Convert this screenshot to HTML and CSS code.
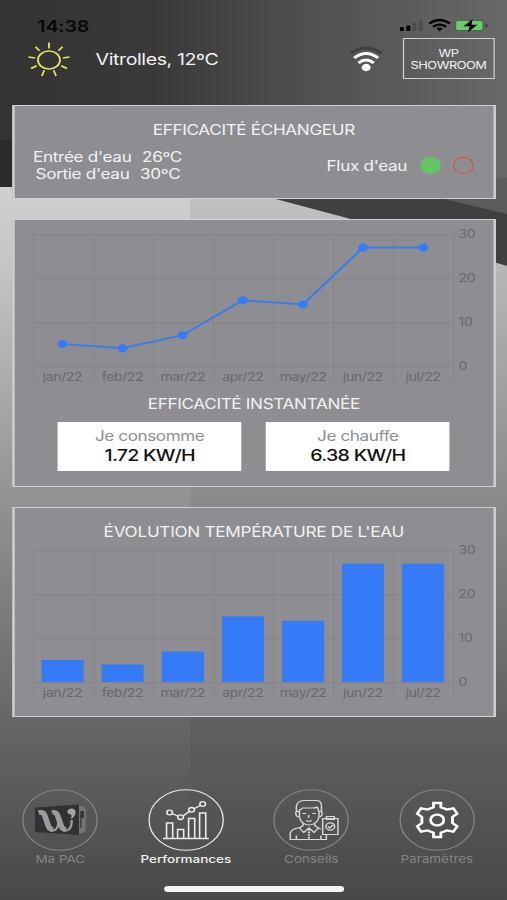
FILE: index.html
```html
<!DOCTYPE html>
<html lang="fr">
<head>
  <meta charset="UTF-8">
  <title>Performances</title>
  <link rel="stylesheet" href="styles.css">
</head>
<body>
<div class="screen">

  <!-- Background -->
  <svg class="backdrop" viewBox="0 0 507 900" preserveAspectRatio="none">
    <defs>
      <linearGradient id="sky" x1="0" y1="0" x2="1" y2="0">
        <stop offset="0" stop-color="#333"/>
        <stop offset="0.3" stop-color="#393939"/>
        <stop offset="0.55" stop-color="#4c4c4c"/>
        <stop offset="1" stop-color="#686868"/>
      </linearGradient>
      <linearGradient id="wall" gradientUnits="userSpaceOnUse" x1="0" y1="187" x2="0" y2="900">
        <stop offset="0" stop-color="#d0d0d0"/>
        <stop offset="0.1" stop-color="#c6c6c6"/>
        <stop offset="0.42" stop-color="#959595"/>
        <stop offset="0.75" stop-color="#666"/>
        <stop offset="1" stop-color="#484848"/>
      </linearGradient>
      <linearGradient id="seam" x1="0" y1="0" x2="0" y2="1">
        <stop offset="0" stop-color="#000" stop-opacity=".07"/>
        <stop offset="0.8" stop-color="#000" stop-opacity=".05"/>
        <stop offset="1" stop-color="#000" stop-opacity="0"/>
      </linearGradient>
    </defs>
    <rect width="507" height="900" fill="url(#sky)"/>
    <path d="M0 140H13V190H0z" fill="#2b2b2b"/>
    <path d="M200 190L507 178V280H200z" fill="#5c5c5c"/>
    <path d="M200 180L440 198L507 214V280H200z" fill="#404040"/>
    <path d="M0 187L230 187L347 218L507 266V900H0z" fill="url(#wall)"/>
    <path d="M190 187H230L347 218L507 266V900H190z" fill="url(#seam)"/>
  </svg>

  <!-- Status bar -->
  <div class="status">
    <span class="clock">14:38</span>
    <svg class="status-icons" width="74" height="16" viewBox="0 0 74 16">
      <rect x="1.5" y="9" width="3.4" height="4" rx="1"/>
      <rect x="6.8" y="7.5" width="3.4" height="5.5" rx="1"/>
      <rect x="12" y="5" width="3" height="8" rx="1" opacity=".2"/>
      <rect x="17" y="2.5" width="3" height="10.5" rx="1" opacity=".2"/>
      <g fill="none" stroke="#000" stroke-width="2.2">
        <path d="M25.5 5.6Q34-1.6 42.500 5.6"/>
        <path d="M28.700 8.8Q34 4.4 39.300 8.8"/>
      </g>
      <path d="M31.400 10.6Q34 8.6 36.600 10.6L34 13.2z"/>
      <rect x="46" y="1.7" width="24.5" height="11.6" rx="3" fill="#4b6b4d"/>
      <rect x="47.5" y="3" width="21.5" height="9" rx="1.8" fill="#6bcb6c"/>
      <path d="M71.5 5.2Q75 7.5 71.5 9.8z" fill="#333"/>
      <path d="M61 1L53.5 8.3H58.5L57 14.3L65 6.7H60z"/>
    </svg>
  </div>

  <!-- Weather and site -->
  <header class="topbar">
    <svg class="sun" width="42" height="38" viewBox="-21 -19 42 38">
      <circle r="9"/>
      <path d="M0-11.500V-17.400"/>
      <path d="M0-12V-17.200" transform="rotate(40)"/>
      <path d="M0-11.500V-17" transform="rotate(80)"/>
      <path d="M0-11.500V-17" transform="rotate(120)"/>
      <path d="M0-11V-17" transform="rotate(160)"/>
      <path d="M0-11V-17" transform="rotate(200)"/>
      <path d="M0-11.500V-17" transform="rotate(240)"/>
      <path d="M0-11.500V-17" transform="rotate(280)"/>
      <path d="M0-12V-17.200" transform="rotate(320)"/>
    </svg>
    <span class="city">Vitrolles, 12ºC</span>
    <svg class="wifi" width="30" height="28" viewBox="0 0 30 28">
      <g fill="none" stroke-width="2.9">
        <path d="M2.700 7.400Q15-3.200 27.300 7.400" stroke="#3f3f3f"/>
        <path d="M5.300 12Q15 3.200 24.700 12" stroke="#fff"/>
        <path d="M8.800 17Q15 11.200 21.200 17" stroke="#fff"/>
      </g>
      <circle cx="15" cy="21.5" r="3.7" fill="#fff"/>
    </svg>
    <div class="site">WP<br>SHOWROOM</div>
  </header>

  <!-- Heat exchanger -->
  <section class="card exchanger">
    <h2>EFFICACITÉ ÉCHANGEUR</h2>
    <div class="exchanger-row">
      <div class="temps">
        <div>Entrée d'eau <span>26ºC</span></div>
        <div class="out">Sortie d'eau <span>30ºC</span></div>
      </div>
      <div class="flow">Flux d'eau <i class="dot on"></i><i class="dot off"></i></div>
    </div>
  </section>

  <!-- Instant efficiency -->
  <section class="card instant">
    <svg class="chart" width="390" height="160" viewBox="0 0 390 160">
      <path class="grid" d="M15 14.5H358M15 58.5H358M15 102.500H358M15 146.500H358M15.500 14V162M64.500 14V162M113.500 14V162M162.500 14V162M211.500 14V162M260.500 14V162M309.500 14V162M358.500 14V162"/>
      <polyline class="line" points="39,124 88,128.300 137,115.200 186.300,80.200 235.400,84.500 284.500,27.600 333.600,27.600"/>
      <g class="pts">
        <circle cx="39" cy="124" r="4"/><circle cx="88" cy="128.300" r="4"/>
        <circle cx="137" cy="115.200" r="4"/><circle cx="186.300" cy="80.200" r="4"/>
        <circle cx="235.400" cy="84.500" r="4"/><circle cx="284.500" cy="27.600" r="4"/>
        <circle cx="333.600" cy="27.600" r="4"/>
      </g>
      <g class="ylab">
        <text x="362.500" y="18.500">30</text><text x="362.500" y="62.500">20</text>
        <text x="362.500" y="106">10</text><text x="362.500" y="150">0</text>
      </g>
      <g class="xlab">
        <text x="39" y="161.500">jan/22</text><text x="88" y="161.500">feb/22</text>
        <text x="137.300" y="161.500">mar/22</text><text x="186.300" y="161.500">apr/22</text>
        <text x="235.500" y="161.500">may/22</text><text x="284.300" y="161.500">jun/22</text>
        <text x="333.500" y="161.500">jul/22</text>
      </g>
    </svg>
    <h2 class="t-instant">EFFICACITÉ INSTANTANÉE</h2>
    <div class="meters">
      <div class="meter"><span>Je consomme</span><b>1.72 KW/H</b></div>
      <div class="meter"><span>Je chauffe</span><b>6.38 KW/H</b></div>
    </div>
  </section>

  <!-- Water temperature -->
  <section class="card water">
    <h2 class="t-water">ÉVOLUTION TEMPÉRATURE DE L'EAU</h2>
    <svg class="chart" width="390" height="160" viewBox="0 0 390 160">
      <path class="grid" d="M15 14.500H358M15 58.500H358M15 102.500H358M15 146.500H358M15.500 14V162M64.500 14V162M113.500 14V162M162.500 14V162M211.500 14V162M260.500 14V162M309.500 14V162M358.500 14V162"/>
      <g class="bars">
        <rect x="22" y="124" width="34.300" height="22"/>
        <rect x="71" y="128.500" width="34.300" height="17.500"/>
        <rect x="120.200" y="115.500" width="34.300" height="30.500"/>
        <rect x="169.300" y="80.300" width="34.300" height="65.700"/>
        <rect x="218.400" y="84.800" width="34.300" height="61.200"/>
        <rect x="267.300" y="27.700" width="34.300" height="118.300"/>
        <rect x="316.400" y="27.700" width="34.300" height="118.300"/>
      </g>
      <g class="ylab">
        <text x="362.500" y="18.500">30</text><text x="362.500" y="62.500">20</text>
        <text x="362.500" y="106">10</text><text x="362.500" y="150">0</text>
      </g>
      <g class="xlab">
        <text x="39" y="161.500">jan/22</text><text x="88" y="161.500">feb/22</text>
        <text x="137.300" y="161.500">mar/22</text><text x="186.300" y="161.500">apr/22</text>
        <text x="235.500" y="161.500">may/22</text><text x="284.300" y="161.500">jun/22</text>
        <text x="333.500" y="161.500">jul/22</text>
      </g>
    </svg>
  </section>

  <!-- Tabs -->
  <nav class="tabs">
    <a class="tab">
      <svg width="62" height="62" viewBox="-31 -31 62 62">
        <circle class="ring" r="30.300"/>
        <path d="M14-15L19.500-13.500L21-10V10L19.500 12.500L14 14.500z" fill="#747474"/>
        <path d="M16.500-9H19.500V-2H17.500V8H16.500z" fill="#333"/>
        <path d="M-20.500-12.500L15.500-15.500V15L-20.500 12z" fill="#303134"/>
        <g fill="none" stroke="#9c9c9c">
          <path d="M-17.500-7.500Q-13.500-8.500-12.500-4.500L-9.500 6Q-8.500 9.500-5.500 9.800" stroke-width="4.600"/>
          <path d="M-6.500-7.500Q-3-8.500-2-4.500L1 6Q2 9.500 5 9.800" stroke-width="4.600"/>
          <path d="M-6 10.800Q-1.500 10-1.200 2M5 10.800Q10 9 9.500 0" stroke-width="2"/>
        </g>
        <path d="M6-9Q7-12 10-11.500Q13.500-10.500 12.500-6Q11.500-2 8.500-1Q10-4 9-5.500Q5.500-6 6-9z" fill="#a6a6a6"/>
      </svg>
      <span>Ma PAC</span>
    </a>
    <a class="tab active">
      <svg width="62" height="62" viewBox="-31 -31 62 62">
        <circle class="ring" r="30.300"/>
        <g fill="none" stroke="#ececec" stroke-width="1.300">
          <path d="M-19 18.500H18.500M-16 18V3H-11V18M-7 18V9.500H-2V18M2 18V-1.500H7V18M11 18V-7H16V18"/>
          <path d="M-11.500-6.500L-6.500-3.800M-2.300-4.200L2.500-8.500M6.500-11.300L11.300-14.500"/>
          <circle cx="-13.500" cy="-7.500" r="2.300"/><circle cx="-4.500" cy="-2.800" r="2.300"/>
          <circle cx="4.500" cy="-10.200" r="2.300"/><circle cx="13.500" cy="-16" r="2.300"/>
        </g>
      </svg>
      <span>Performances</span>
    </a>
    <a class="tab">
      <svg width="62" height="62" viewBox="-31 -31 62 62">
        <circle class="ring" r="30.300"/>
        <g fill="none" stroke="#d8d8d8" stroke-width="1.200" stroke-linejoin="round">
          <path d="M-12-8V-14Q-11-19.500-5-19.500H5Q8.500-19 8.500-14V-8"/>
          <path d="M-9.500-8V-10Q-8-10.500-7-12H1Q4-12 5-13Q6-10 6.500-8"/>
          <path d="M-9.500-8.500Q-13-9-12.500-6Q-12-3-9.500-3M6.500-8.500Q9.500-9 9-6Q8.500-3 6.500-3"/>
          <path d="M-9.500-8V-3Q-8 4.500-1.700 5Q5 4.500 6.500-3V-8M-7-6.500H-4M1-6.500H4M-2-5V-2M-4 .5Q-2 2 .5 .5"/>
          <path d="M-6.500 3V5.500L-9.500 8L-6 12.500L-1.700 8L2.500 12.500L6 8L3 5.500V3"/>
          <path d="M-9 7.500Q-17 9-17 14V19.500H12.500V15M-12 19.500V15.500M8 19.500V15.500M5.500 8L8 9"/>
          <path d="M-1.700 9V19" stroke-width="1.800" stroke-dasharray="1.600 1"/>
          <path d="M9.500-1.500H22V14.500H9.500zM12.500-3.500H19V-.5H12.500z"/>
          <circle cx="15.700" cy="6.500" r="3.600"/>
          <path d="M13.700 6.500L15.200 8L18 5"/>
        </g>
      </svg>
      <span>Conseils</span>
    </a>
    <a class="tab">
      <svg width="62" height="62" viewBox="-31 -31 62 62">
        <circle class="ring" r="30.300"/>
        <g fill="none" stroke="#fff" stroke-width="2.300">
          <path d="M-3-12.800V-17H3V-12.800L8-10.500L13.200-11.700L16.300-6.300L12.500-3V3L16.300 6.300L13.200 11.700L8 10.500L3 12.800V17H-3V12.800L-8 10.500L-13.200 11.700L-16.300 6.300L-12.500 3V-3L-16.300-6.300L-13.200-11.700L-8-10.500z"/>
          <circle r="5.400"/>
        </g>
      </svg>
      <span>Paramètres</span>
    </a>
  </nav>
  <div class="home"></div>

</div>
</body>
</html>
```
FILE: styles.css
```css
* {
  box-sizing: border-box;
}
body {
  margin: 0;
  width: 507px;
  height: 900px;
  overflow: hidden;
  background: #555;
  font-family: Inter, "Liberation Sans", sans-serif;
}
/* 414pt wide screen stretched over the window */
.screen {
  position: relative;
  width: 414px;
  height: 900px;
  transform: scaleX(1.2246);
  transform-origin: 0 0;
  display: flex;
  flex-direction: column;
  color: #f2f2f2;
}
.backdrop {
  position: absolute;
  inset: 0;
  width: 414px;
  height: 900px;
  z-index: -1;
}
.status {
  height: 38px;
  padding: 18px 15.5px 0 30.5px;
  display: flex;
  justify-content: space-between;
  align-items: flex-start;
}
.clock {
  font-size: 16px;
  line-height: 16px;
  font-weight: 600;
  letter-spacing: -0.15px;
  color: #080808;
}
.topbar {
  height: 67px;
  padding: 0 10px 0 19px;
  display: flex;
  align-items: flex-start;
}
.sun {
  margin-top: 3px;
  fill: none;
  stroke: #e3e35a;
  stroke-width: 1.5;
}
.city {
  margin: 11px 0 0 17px;
  font-size: 16px;
  line-height: 20px;
  letter-spacing: -0.33px;
}
.wifi {
  margin: 8px 15px 0 auto;
}
.site {
  width: 75.5px;
  height: 41px;
  padding-top: 9px;
  border: 1.5px solid #d0d0d0;
  text-align: center;
  font-size: 10.5px;
  line-height: 12px;
  letter-spacing: -0.4px;
}
.card {
  width: 394.5px;
  margin: 0 0 20px 10px;
  border: 2px solid #d0d0d0;
  border-width: 1px 2px;
  background: #8e8e92;
}
.card h2 {
  margin: 0;
  text-align: center;
  font-size: 14px;
  line-height: 18px;
  font-weight: 400;
  letter-spacing: -0.28px;
}
.exchanger {
  height: 93.5px;
  padding-top: 15px;
}
.exchanger-row {
  display: flex;
  justify-content: space-between;
  align-items: center;
  padding: 9px 16px 0 15px;
  font-size: 14px;
  line-height: 17px;
  letter-spacing: -0.27px;
}
.temps span {
  margin-left: 5px;
}
.temps .out {
  padding-left: 2px;
}
.flow {
  display: flex;
  align-items: center;
}
.dot {
  width: 17px;
  height: 17px;
  border-radius: 50%;
  margin-left: 10px;
}
.dot.on {
  background: #67c466;
}
.dot.off {
  border: 1.5px solid #d0504c;
}
.instant {
  height: 268.5px;
}
.chart {
  display: block;
  overflow: visible;
}
.grid {
  fill: none;
  stroke: #828286;
  stroke-width: 0.7;
}
.line {
  fill: none;
  stroke: #3c7bea;
  stroke-width: 2;
}
.pts,
.bars {
  fill: #357af6;
}
.ylab,
.xlab {
  font-size: 11.5px;
  letter-spacing: -0.35px;
  fill: #68686b;
}
.xlab {
  text-anchor: middle;
}
.card .t-instant {
  padding-top: 15px;
}
.meters {
  display: flex;
  justify-content: center;
  gap: 20px;
  padding-top: 9px;
}
.meter {
  width: 150px;
  height: 49px;
  padding-top: 4px;
  background: #fff;
  display: flex;
  flex-direction: column;
  align-items: center;
}
.meter span {
  font-size: 14px;
  line-height: 19px;
  letter-spacing: -0.35px;
  color: #8e8e93;
}
.meter b {
  font-size: 16px;
  line-height: 20px;
  font-weight: 500;
  letter-spacing: -0.6px;
  color: #111;
}
.water {
  height: 210px;
  padding-top: 15px;
}
.card .t-water {
  height: 13px;
  letter-spacing: -0.22px;
}
.tabs {
  width: 410px;
  margin: 52px 0 0 -2px;
  display: grid;
  grid-template-columns: repeat(4, 1fr);
}
.tab {
  display: flex;
  flex-direction: column;
  align-items: center;
  font-size: 11px;
  line-height: 16px;
  color: #858585;
}
.ring {
  fill: none;
  stroke: #858585;
  stroke-width: 1.1;
}
.active {
  color: #f2f2f2;
  font-weight: 500;
}
.active .ring {
  stroke: #e8e8e8;
}
.home {
  width: 147.5px;
  height: 5.5px;
  margin: 19px 0 0 133.5px;
  border-radius: 3px;
  background: #f4f4f4;
}
```
